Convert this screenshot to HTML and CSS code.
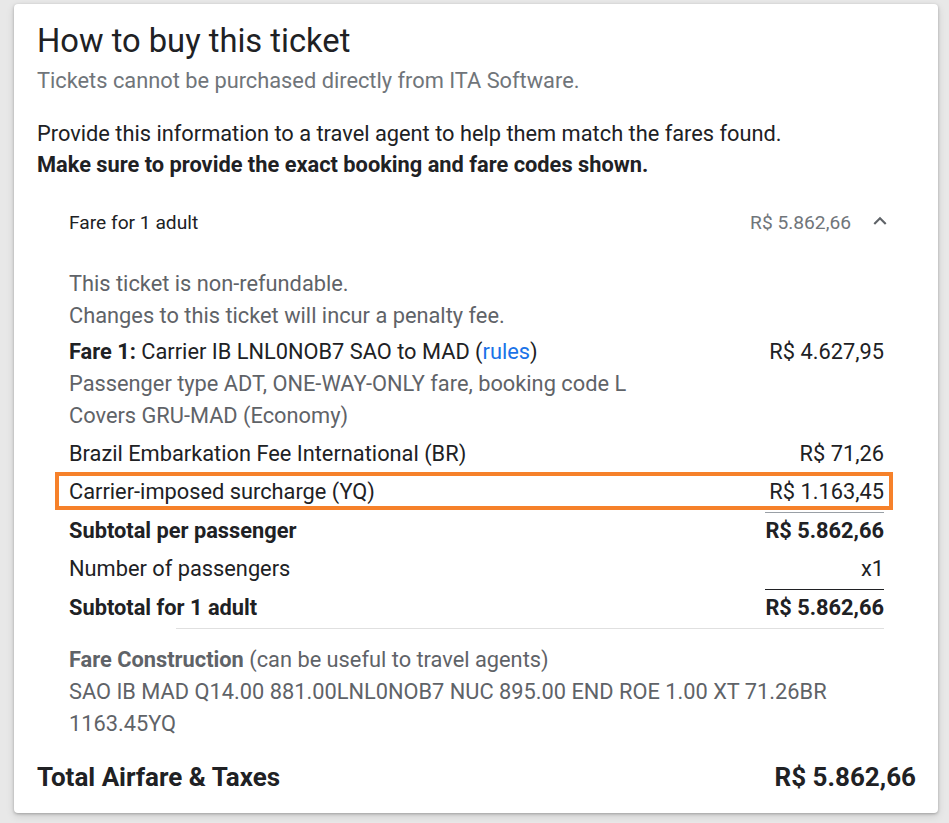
FILE: index.html
```html
<!DOCTYPE html>
<html lang="en">
<head>
<meta charset="utf-8">
<title>How to buy this ticket</title>
<link rel="stylesheet" href="styles.css">
</head>
<body>
<div class="card">
  <h1 class="title">How to buy this ticket</h1>
  <p class="subtitle">Tickets cannot be purchased directly from ITA Software.</p>
  <p class="info">Provide this information to a travel agent to help them match the fares found.</p>
  <p class="info strong">Make sure to provide the exact booking and fare codes shown.</p>

  <div class="panel">
    <div class="panel-head">
      <span class="head-label">Fare for 1 adult</span>
      <span class="head-right">
        <span class="head-price">R$ 5.862,66</span>
        <svg class="chev" viewBox="0 0 24 24" width="26" height="26"><path d="M12 8l-6 6 1.41 1.41L12 10.83l4.59 4.58L18 14z" fill="#5f6368"/></svg>
      </span>
    </div>
    <div class="panel-body">
      <div class="notes">
        <div>This ticket is non-refundable.</div>
        <div>Changes to this ticket will incur a penalty fee.</div>
      </div>
      <div class="grid">
        <div class="fare-desc">
          <div class="dark"><b>Fare 1:</b> Carrier IB LNL0NOB7 SAO to MAD (<a class="link" href="#">rules</a>)</div>
          <div>Passenger type ADT, ONE-WAY-ONLY fare, booking code L</div>
          <div>Covers GRU-MAD (Economy)</div>
        </div>
        <div class="amt fare-amt">R$ 4.627,95</div>

        <div class="row-label">Brazil Embarkation Fee International (BR)</div>
        <div class="amt">R$ 71,26</div>

        <div class="row-label r3">Carrier-imposed surcharge (YQ)</div>
        <div class="amt r3">R$ 1.163,45</div>
        <div class="hl-box"></div>

        <div class="row-label bold r4">Subtotal per passenger</div>
        <div class="amt bold rule-gray r4">R$ 5.862,66</div>

        <div class="row-label r5">Number of passengers</div>
        <div class="amt r5">x1</div>

        <div class="row-label bold r6">Subtotal for 1 adult</div>
        <div class="amt bold rule-black r6">R$ 5.862,66</div>
      </div>
      <div class="sep"></div>
      <div class="construction">
        <div><b>Fare Construction</b> (can be useful to travel agents)</div>
        <div>SAO IB MAD Q14.00 881.00LNL0NOB7 NUC 895.00 END ROE 1.00 XT 71.26BR 1163.45YQ</div>
      </div>
    </div>
  </div>

  <div class="total">
    <span>Total Airfare &amp; Taxes</span>
    <span>R$ 5.862,66</span>
  </div>
</div>
</body>
</html>
```

FILE: styles.css
```css
html, body {
  margin: 0;
  padding: 0;
}
body {
  background: #e8e8e8;
  font-family: Roboto, "Noto Sans", Arial, sans-serif;
  color: #202124;
  padding: 4px 0 0 14px;
  height: 823px;
  box-sizing: border-box;
  overflow: hidden;
}
.card {
  width: 924px;
  height: 809px;
  box-sizing: border-box;
  background: #fff;
  border-radius: 4px;
  box-shadow: 0 1px 3px rgba(0,0,0,0.25), 0 3px 8px rgba(0,0,0,0.12);
  padding: 19px 22px 0 23px;
}
.title {
  margin: 0;
  font-size: 32.7px;
  font-weight: 400;
  line-height: 36px;
  color: #202124;
}
.subtitle {
  margin: 5.5px 0 0;
  font-size: 21.8px;
  line-height: 31px;
  color: #70757a;
}
.info {
  margin: 0;
  font-size: 21.8px;
  line-height: 31px;
  color: #202124;
}
.subtitle + .info {
  margin-top: 22px;
}
.info.strong {
  font-weight: 700;
}
.panel {
  margin-top: 11px;
}
.panel-head {
  display: flex;
  align-items: center;
  justify-content: space-between;
  height: 64px;
  padding: 0 23px 0 32px;
}
.head-label {
  font-size: 19.2px;
  color: #202124;
}
.head-right {
  display: flex;
  align-items: center;
}
.head-price {
  font-size: 19.2px;
  color: #70757a;
}
.chev {
  margin-left: 16px;
  margin-top: -3px;
  display: block;
}
.panel-body {
  padding: 13px 32px 0 32px;
  font-size: 21.8px;
  line-height: 32px;
  color: #5f6368;
}
.notes {
  color: #5f6368;
}
.grid {
  display: grid;
  grid-template-columns: 1fr auto;
  margin-top: 4px;
}
.fare-desc {
  margin-bottom: 3px;
}
.dark {
  color: #202124;
}
.dark b {
  font-weight: 700;
}
.link {
  color: #1a73e8;
  text-decoration: none;
}
.fare-amt {
  align-self: start;
  padding: 0 !important;
}
.row-label {
  color: #202124;
  padding: 3px 0 3.5px;
  line-height: 32px;
}
.amt {
  color: #202124;
  text-align: right;
  padding: 3px 0 3.5px;
  line-height: 32px;
}
.r3 { grid-row: 3; }
.r4 { grid-row: 4; }
.r5 { grid-row: 5; }
.r6 { grid-row: 6; }
.row-label.r3, .row-label.r4, .row-label.r5, .row-label.r6 { grid-column: 1; }
.amt.r3, .amt.r4, .amt.r5, .amt.r6 { grid-column: 2; }
.hl-box {
  grid-row: 3;
  grid-column: 1 / -1;
  margin: -1.5px -9px 1.5px -14px;
  border: 4.5px solid #f6812a;
  pointer-events: none;
}
.bold {
  font-weight: 700;
}
.rule-gray {
  border-top: 1px solid #9aa0a6;
  padding-top: 2px;
}
.rule-black {
  border-top: 1px solid #202124;
  padding-top: 2px;
}
.sep {
  margin: 1px 0 0 107px;
  border-top: 1px solid #e0e0e0;
}
.construction {
  margin-top: 15px;
  color: #5f6368;
}
.construction b {
  font-weight: 700;
}
.total {
  display: flex;
  justify-content: space-between;
  margin-top: 21px;
  font-size: 26px;
  font-weight: 700;
  line-height: 32px;
  color: #202124;
}
```
